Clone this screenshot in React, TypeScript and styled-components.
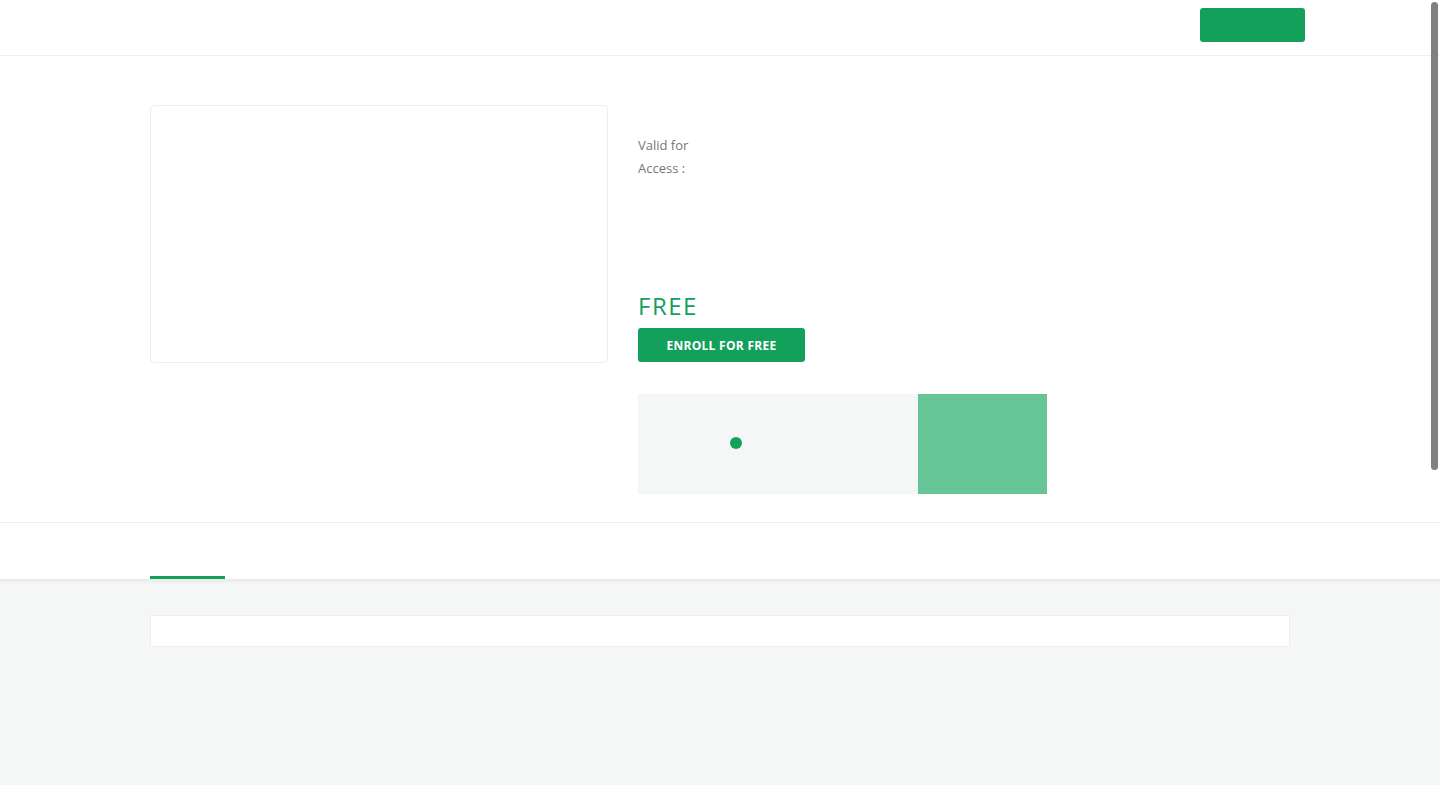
import React from "react";
import styled, { createGlobalStyle } from "styled-components";

const GlobalStyle = createGlobalStyle`
  html, body { margin: 0; padding: 0; background: #ffffff; }
  body { font-family: "Open Sans", "Noto Sans", Arial, sans-serif; overflow: hidden; }
  * { box-sizing: border-box; }
`;

const GREEN = "#13a05b";

const Header = styled.header`
  height: 56px;
  border-bottom: 1px solid #f0f0f0;
`;

const HeaderInner = styled.div`
  width: 1170px;
  margin: 0 auto;
  display: flex;
  justify-content: flex-end;
  padding-top: 8px;
`;

const HeaderButton = styled.button`
  width: 105px;
  height: 34px;
  border: none;
  border-radius: 3px;
  background: ${GREEN};
  cursor: pointer;
`;

const Hero = styled.section`
  padding: 49px 0 28px;
  border-bottom: 1px solid #f0f0f0;
`;

const Container = styled.div`
  width: 1140px;
  margin: 0 auto;
`;

const HeroRow = styled.div`
  display: flex;
  gap: 30px;
  align-items: flex-start;
`;

const ImageCard = styled.div`
  width: 458px;
  height: 258px;
  border: 1px solid #eeeeee;
  border-radius: 4px;
  background: #fff;
  flex-shrink: 0;
`;

const Details = styled.div`
  display: flex;
  flex-direction: column;
  align-items: flex-start;
  padding-top: 29px;
`;

const InfoLine = styled.div`
  font-size: 13px;
  line-height: 23px;
  color: #777777;
`;

const Price = styled.div`
  margin-top: 111px;
  font-size: 24px;
  line-height: 30px;
  color: ${GREEN};
  letter-spacing: 1.5px;
`;

const EnrollButton = styled.button`
  margin-top: 7px;
  width: 167px;
  height: 34px;
  border: none;
  border-radius: 3px;
  background: ${GREEN};
  color: #ffffff;
  font-family: "Open Sans", Arial, sans-serif;
  font-weight: 700;
  font-size: 12px;
  letter-spacing: 0.3px;
  cursor: pointer;
`;

const Promo = styled.div`
  margin-top: 32px;
  display: flex;
  height: 100px;
`;

const PromoMain = styled.div`
  width: 280px;
  background: #f5f7f6;
  display: flex;
  align-items: center;
  padding-left: 92px;
  padding-bottom: 2px;
`;

const Dot = styled.span`
  width: 12px;
  height: 12px;
  border-radius: 50%;
  background: ${GREEN};
`;

const PromoSide = styled.div`
  width: 129px;
  background: #66c496;
`;

const TabBar = styled.nav`
  height: 56px;
  background: #fff;
  box-shadow: 0 2px 4px rgba(0, 0, 0, 0.07);
  position: relative;
  z-index: 1;
`;

const TabRow = styled.div`
  display: flex;
  height: 56px;
  align-items: flex-end;
`;

const Tab = styled.div<{ $active?: boolean }>`
  width: 75px;
  height: 3px;
  background: ${(p) => (p.$active ? GREEN : "transparent")};
`;

const Content = styled.main`
  background: #f5f7f6;
  min-height: 206px;
  padding-top: 36px;
`;

const Panel = styled.div`
  height: 32px;
  background: #ffffff;
  border: 1px solid #eeeeee;
`;

const ScrollThumb = styled.div`
  position: fixed;
  top: 2px;
  right: 2px;
  width: 7px;
  height: 468px;
  border-radius: 4px;
  background: #808080;
`;

export default function App() {
  return (
    <>
      <GlobalStyle />
      <Header>
        <HeaderInner>
          <HeaderButton aria-label="menu" />
        </HeaderInner>
      </Header>
      <Hero>
        <Container>
          <HeroRow>
            <ImageCard />
            <Details>
              <InfoLine>Valid for</InfoLine>
              <InfoLine>Access :</InfoLine>
              <Price>FREE</Price>
              <EnrollButton>ENROLL FOR FREE</EnrollButton>
              <Promo>
                <PromoMain>
                  <Dot />
                </PromoMain>
                <PromoSide />
              </Promo>
            </Details>
          </HeroRow>
        </Container>
      </Hero>
      <TabBar>
        <Container>
          <TabRow>
            <Tab $active />
          </TabRow>
        </Container>
      </TabBar>
      <Content>
        <Container>
          <Panel />
        </Container>
      </Content>
      <ScrollThumb />
    </>
  );
}
